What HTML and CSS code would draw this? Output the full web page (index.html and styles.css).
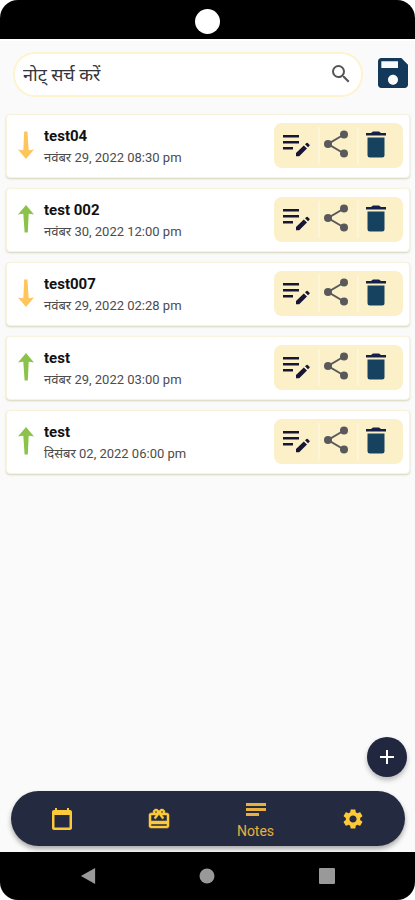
FILE: index.html
```
<!DOCTYPE html>
<html lang="hi">
<head>
<meta charset="utf-8">
<meta name="viewport" content="width=device-width, initial-scale=1">
<title>Notes</title>
<link rel="stylesheet" href="styles.css">
</head>
<body>
<svg class="sprite" aria-hidden="true">
  <symbol id="arrow" viewBox="0 0 16 28"><path d="M8 0 16 9.500Q13 8.800 10.700 8.800L9.800 27.500H6.600L5.300 8.800Q3 8.800 0 9.500Z"/></symbol>
  <symbol id="edit" viewBox="0 0 28 24"><path d="M0 2h16v2.500H0zM0 8h16v2.500H0zM0 14h10v2.500H0zM13 20l7.800-7.600 3.200 3.200-7.800 7.600H13zM22 11.300l1.500-1.400q.6-.5 1.200 0l1.800 1.800q.5.600 0 1.100L25 14.300z"/></symbol>
  <symbol id="share" viewBox="0 0 24 28"><path d="M20 4.500 4 14l16 9.500" fill="none" stroke="currentColor" stroke-width="2"/><circle cx="20" cy="4.500" r="4"/><circle cx="4" cy="14" r="4"/><circle cx="20" cy="23.500" r="4"/></symbol>
  <symbol id="trash" viewBox="0 0 20 28"><path d="M0 2h5l2-1.500h6L15 2h5v2.500H0z" fill="#14204a"/><path d="M1.500 6.500h17V24q0 2.500-2.500 2.500H4Q1.500 26.500 1.500 24z"/></symbol>
</svg>
<div class="phone">
  <div class="status"><span class="camera"></span></div>
  <main class="screen">
    <form class="top">
      <label class="search">
        <input type="text" placeholder="नोट् सर्च करें" aria-label="नोट् सर्च करें">
        <svg viewBox="3 3 18 18"><path d="M15.500 14h-.79l-.28-.27A6.470 6.470 0 0 0 16 9.500 6.500 6.500 0 1 0 9.500 16c1.610 0 3.090-.59 4.230-1.570l.27.28v.79l5 4.990L20.490 19l-4.990-5zm-6 0C7.010 14 5 11.990 5 9.500S7.010 5 9.500 5 14 7.010 14 9.500 11.990 14 9.500 14z"/></svg>
      </label>
      <button class="save" type="button" aria-label="Save"><svg viewBox="3 3 18 18"><path d="M17 3H5c-1.110 0-2 .9-2 2v14c0 1.100.89 2 2 2h14c1.100 0 2-.9 2-2V7l-4-4zm-5 16c-1.660 0-3-1.340-3-3s1.340-3 3-3 3 1.340 3 3-1.340 3-3 3zm3-10H5V5h10v4z"/></svg></button>
    </form>
    <ul class="notes">
      <li class="note">
        <svg class="arrow down"><use href="#arrow"/></svg>
        <div class="text"><h2>test04</h2><p>नवंबर 29, 2022 08:30 pm</p></div>
        <div class="actions"><button class="edit" aria-label="Edit"><svg><use href="#edit"/></svg></button><button class="share" aria-label="Share"><svg><use href="#share"/></svg></button><button class="trash" aria-label="Delete"><svg><use href="#trash"/></svg></button></div>
      </li>
      <li class="note">
        <svg class="arrow"><use href="#arrow"/></svg>
        <div class="text"><h2>test 002</h2><p>नवंबर 30, 2022 12:00 pm</p></div>
        <div class="actions"><button class="edit" aria-label="Edit"><svg><use href="#edit"/></svg></button><button class="share" aria-label="Share"><svg><use href="#share"/></svg></button><button class="trash" aria-label="Delete"><svg><use href="#trash"/></svg></button></div>
      </li>
      <li class="note">
        <svg class="arrow down"><use href="#arrow"/></svg>
        <div class="text"><h2>test007</h2><p>नवंबर 29, 2022 02:28 pm</p></div>
        <div class="actions"><button class="edit" aria-label="Edit"><svg><use href="#edit"/></svg></button><button class="share" aria-label="Share"><svg><use href="#share"/></svg></button><button class="trash" aria-label="Delete"><svg><use href="#trash"/></svg></button></div>
      </li>
      <li class="note">
        <svg class="arrow"><use href="#arrow"/></svg>
        <div class="text"><h2>test</h2><p>नवंबर 29, 2022 03:00 pm</p></div>
        <div class="actions"><button class="edit" aria-label="Edit"><svg><use href="#edit"/></svg></button><button class="share" aria-label="Share"><svg><use href="#share"/></svg></button><button class="trash" aria-label="Delete"><svg><use href="#trash"/></svg></button></div>
      </li>
      <li class="note">
        <svg class="arrow"><use href="#arrow"/></svg>
        <div class="text"><h2>test</h2><p>दिसंबर 02, 2022 06:00 pm</p></div>
        <div class="actions"><button class="edit" aria-label="Edit"><svg><use href="#edit"/></svg></button><button class="share" aria-label="Share"><svg><use href="#share"/></svg></button><button class="trash" aria-label="Delete"><svg><use href="#trash"/></svg></button></div>
      </li>
    </ul>
    <button class="add" aria-label="Add note"><svg viewBox="0 0 16 16"><path d="M7 1h2v6h6v2H9v6H7V9H1V7h6z"/></svg></button>
    <nav class="tabs">
      <a href="#calendar" aria-label="Calendar"><svg viewBox="0 0 24 24"><path d="M20 3h-1V1h-2v2H7V1H5v2H4c-1.100 0-2 .9-2 2v16c0 1.100.9 2 2 2h16c1.100 0 2-.9 2-2V5c0-1.100-.9-2-2-2zm-.5 17.500h-15V8h15v12.500z"/></svg></a>
      <a href="#gifts" aria-label="Gifts"><svg viewBox="0 0 24 24"><path stroke="currentColor" stroke-width=".5" d="M20 6h-2.180c.11-.31.18-.65.18-1 0-1.660-1.340-3-3-3-1.050 0-1.960.54-2.500 1.350l-.5.670-.5-.68C10.960 2.540 10.050 2 9 2 7.340 2 6 3.340 6 5c0 .35.070.69.18 1H4c-1.110 0-1.990.89-1.990 2L2 19c0 1.110.89 2 2 2h16c1.110 0 2-.89 2-2V8c0-1.110-.89-2-2-2zm-5-2c.55 0 1 .45 1 1s-.45 1-1 1-1-.45-1-1 .45-1 1-1zM9 4c.55 0 1 .45 1 1s-.45 1-1 1-1-.45-1-1 .45-1 1-1zm11 15H4v-2h16v2zm0-5H4V8h5.080L7 10.830 8.620 12 11 8.760l1-1.360 1 1.360L15.380 12 17 10.830 14.920 8H20v6z"/></svg></a>
      <a class="current" href="#notes" aria-current="page"><svg viewBox="0 0 20 16"><path d="M0 1h20v3H0zM0 6h20v3H0zM0 11h13v3H0z"/></svg><span>Notes</span></a>
      <a href="#settings" aria-label="Settings"><svg viewBox="0 0 24 24"><path d="M19.140 12.940c.04-.3.060-.61.060-.94 0-.32-.02-.64-.07-.94l2.030-1.580c.18-.14.23-.41.12-.61l-1.920-3.320c-.12-.22-.37-.29-.59-.22l-2.390.96c-.5-.38-1.030-.7-1.620-.94l-.36-2.540c-.04-.24-.24-.41-.48-.41h-3.840c-.24 0-.43.17-.47.41l-.36 2.540c-.59.24-1.130.57-1.620.94l-2.390-.96c-.22-.08-.47 0-.59.22L2.740 8.870c-.12.21-.08.47.12.61l2.030 1.580c-.05.3-.09.63-.09.94s.02.64.07.94l-2.030 1.580c-.18.14-.23.41-.12.61l1.920 3.320c.12.22.37.29.59.22l2.390-.96c.5.38 1.030.7 1.620.94l.36 2.540c.05.24.24.41.48.41h3.840c.24 0 .44-.17.47-.41l.36-2.540c.59-.24 1.130-.56 1.620-.94l2.390.96c.22.08.47 0 .59-.22l1.920-3.320c.12-.22.070-.47-.12-.61l-2.010-1.580zM12 15.600c-1.980 0-3.600-1.620-3.600-3.600s1.620-3.600 3.600-3.600 3.600 1.620 3.600 3.600-1.620 3.600-3.600 3.600z"/></svg></a>
    </nav>
  </main>
  <div class="system">
    <button aria-label="Back"><svg viewBox="0 0 16 18"><path d="M0 9 16 0v18z"/></svg></button>
    <button aria-label="Home"><svg viewBox="0 0 16 16"><circle cx="8" cy="8" r="7.500"/></svg></button>
    <button aria-label="Recent apps"><svg viewBox="0 0 16 16"><rect width="16" height="16" rx="1"/></svg></button>
  </div>
</div>
</body>
</html>
```
FILE: styles.css
```
* { box-sizing: border-box; }
body { margin: 0; background: #fff; font-family: Roboto, "Noto Sans", "Liberation Sans", sans-serif; }
button { border: 0; padding: 0; background: none; color: inherit; display: flex; align-items: center; justify-content: center; }
svg { display: block; fill: currentColor; }
h2, p, ul { margin: 0; padding: 0; }
.sprite { position: absolute; width: 0; height: 0; }
.phone { min-height: 100vh; display: flex; flex-direction: column; background: #000; border-radius: 18px; overflow: hidden; }
.status { height: 39px; display: flex; justify-content: center; padding-top: 9px; }
.camera { width: 25px; height: 25px; border-radius: 50%; background: #fff; }
.screen { flex: 1; display: flex; flex-direction: column; background: #fafafa; border-top: 2px solid #fff; padding-bottom: 6px; }
.top { display: flex; align-items: center; gap: 15px; padding: 11px 7px 0 13px; }
.search { flex: 1; min-width: 0; height: 45px; display: flex; align-items: center; padding: 0 11px 0 8px; border: 2px solid #fcf3cf; border-radius: 22px; background: #fff; color: #555; }
.search input { flex: 1; min-width: 0; border: 0; padding: 0; outline: 0; background: none; font: 18px/28px Roboto, "Noto Sans", sans-serif; color: #333; }
.search input::placeholder { color: #34343c; opacity: 1; }
.search svg { width: 18px; height: 18px; margin-bottom: 2px; }
.save { padding-bottom: 4px; color: #14385a; }
.save svg { width: 30px; height: 30px; }
.notes { list-style: none; display: flex; flex-direction: column; gap: 10px; padding: 17px 5px 0 6px; }
.note { height: 64px; display: flex; align-items: center; padding: 0 6px 2px 11px; background: #fff; border: 1px solid #f8f3dc; border-radius: 4px; box-shadow: 0 1px 2px #d5d5bc; }
.arrow { width: 16px; height: 28px; color: #8bc34a; }
.arrow.down { color: #fdc55a; transform: rotate(180deg); }
.text { flex: 1; min-width: 0; padding: 4px 0 0 10px; white-space: nowrap; }
.text h2 { font-size: 15px; line-height: 21px; font-weight: 700; color: #111; }
.text p { font-size: 13px; line-height: 21px; color: #4c4c4c; }
.actions { display: flex; align-items: center; height: 45px; padding-right: 9px; border-radius: 8px; background: #fcf0c8; }
.actions button { height: 37px; }
.actions button + button { border-left: 2px solid #fdf5da; }
.edit { width: 44px; padding-left: 2px; color: #171733; }
.edit svg { width: 28px; height: 24px; }
.share { width: 39px; padding: 0 6px 3px 0; color: #59595c; }
.share svg { width: 24px; height: 28px; }
.trash { width: 37px; padding-right: 2px; color: #17425f; }
.trash svg { width: 20px; height: 28px; }
.add { width: 40px; height: 40px; margin: auto 8px 14px auto; border-radius: 50%; background: #222740; color: #fff; box-shadow: 0 3px 5px #0004; }
.add svg { width: 16px; height: 16px; }
.tabs { height: 55px; margin: 0 10px 0 11px; padding: 0 4px 0 2px; display: flex; border-radius: 28px; background: #242b40; box-shadow: 0 3px 5px #0005; }
.tabs a { flex: 1; display: flex; flex-direction: column; align-items: center; justify-content: center; gap: 5px; color: #fcc938; text-decoration: none; font-size: 14px; line-height: 16px; }
.tabs svg { width: 24px; height: 24px; }
.tabs .current { padding-top: 4px; color: #e6b13c; }
.tabs .current svg { width: 20px; height: 16px; }
.system { height: 48px; display: flex; justify-content: space-around; padding: 0 28px; color: #999; }
.system svg { width: 16px; height: 16px; }
```
